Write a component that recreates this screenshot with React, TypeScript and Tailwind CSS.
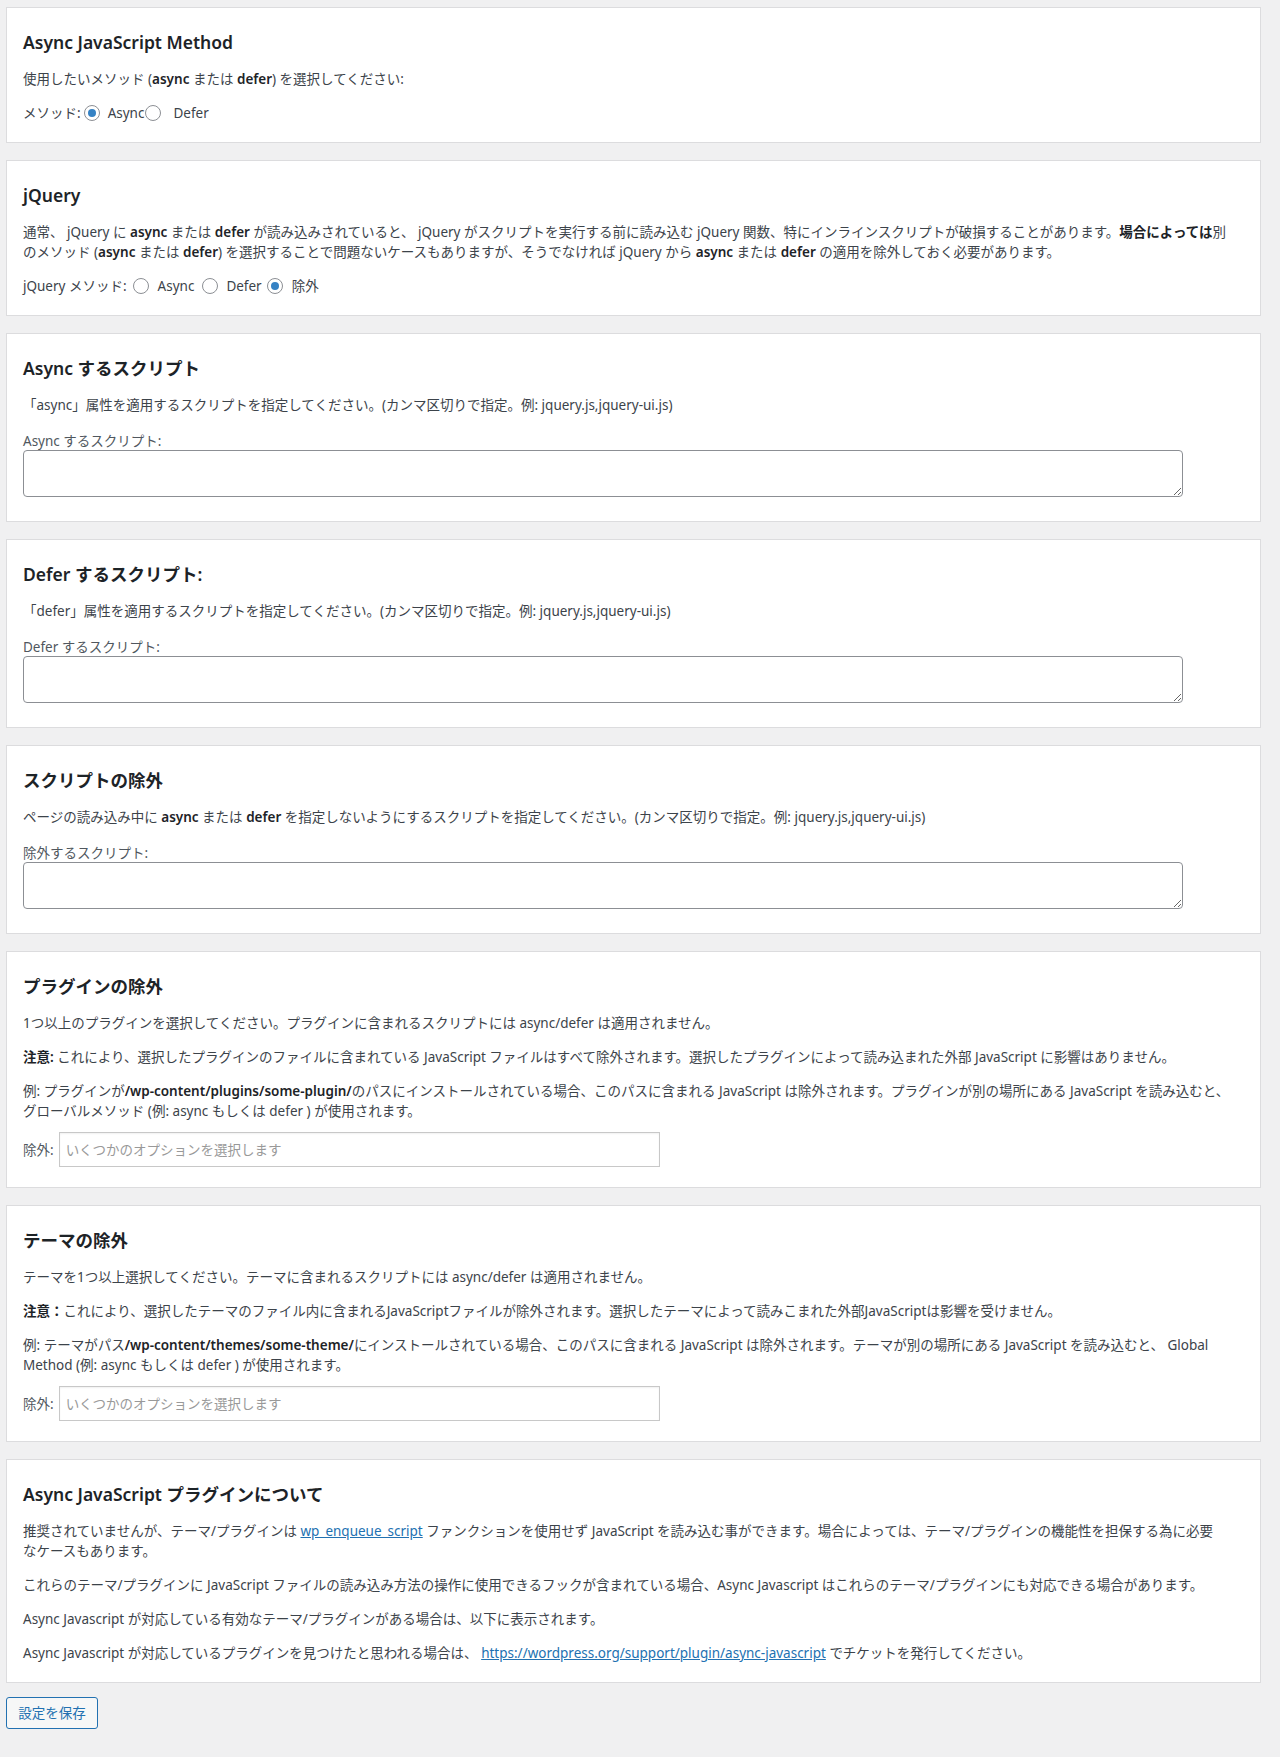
import React from 'react';

const font = "font-['Noto_Sans','Noto_Sans_CJK_JP',sans-serif]";

function Panel({ title, children, className = '' }: { title: string; children: React.ReactNode; className?: string }) {
  return (
    <div className={`w-[1255px] bg-white border border-[#dcdcde] px-4 pt-[22px] ${className}`}>
      <h2 className="text-[17.5px] leading-[24px] font-semibold text-[#1d2327] mb-[15px]">{title}</h2>
      {children}
    </div>
  );
}

function Radio({ checked = false, className = '' }: { checked?: boolean; className?: string }) {
  return (
    <span
      className={`inline-flex w-4 h-4 shrink-0 items-center justify-center rounded-full border border-[#8c8f94] bg-white ${className}`}
    >
      {checked && <span className="w-2 h-2 rounded-full bg-[#3582c4]" />}
    </span>
  );
}

function ScriptField({ label }: { label: string }) {
  return (
    <div className="pb-[24px]">
      <div className="mt-[17px] leading-[18px] text-[#50575e]">{label}</div>
      <textarea className="block w-[1160px] h-[47px] border border-[#8c8f94] rounded-[4px] bg-white outline-none" />
    </div>
  );
}

function ExcludeSelect() {
  return (
    <div className="flex items-center mt-[11px] pb-[20px]">
      <span className="text-[#50575e]">除外:</span>
      <div className="ml-[5px] w-[601px] h-[35px] border border-[#c8c8c8] bg-white flex items-center pl-[6px] text-[#999999] shadow-[inset_0_1px_2px_rgba(0,0,0,0.06)]">
        いくつかのオプションを選択します
      </div>
    </div>
  );
}

export default function App() {
  return (
    <div className={`min-h-[1757px] bg-[#f0f0f1] pt-[7px] pl-[6px] text-[13.5px] leading-[20px] text-[#3c434a] ${font}`}>
      <div className="flex flex-col gap-[17px]">
        <Panel title="Async JavaScript Method" className="pb-[19px]">
          <p>
            使用したいメソッド (<b className="font-semibold text-[#1d2327]">async</b> または{' '}
            <b className="font-semibold text-[#1d2327]">defer</b>) を選択してください:
          </p>
          <div className="flex items-center mt-[14px] h-5">
            <span>メソッド:</span>
            <Radio checked className="ml-[3px]" />
            <span className="ml-[8px]">Async</span>
            <Radio className="ml-[1px]" />
            <span className="ml-[12px]">Defer</span>
          </div>
        </Panel>

        <Panel title="jQuery" className="pb-[19px]">
          <p className="whitespace-nowrap">
            通常、 jQuery に <b className="font-semibold text-[#1d2327]">async</b> または{' '}
            <b className="font-semibold text-[#1d2327]">defer</b> が読み込みされていると、 jQuery
            がスクリプトを実行する前に読み込む jQuery 関数、特にインラインスクリプトが破損することがあります。
            <b className="font-semibold text-[#1d2327]">場合によっては</b>別
            <br />
            のメソッド (<b className="font-semibold text-[#1d2327]">async</b> または{' '}
            <b className="font-semibold text-[#1d2327]">defer</b>) を選択することで問題ないケースもありますが、そうでなければ
            jQuery から <b className="font-semibold text-[#1d2327]">async</b> または{' '}
            <b className="font-semibold text-[#1d2327]">defer</b> の適用を除外しておく必要があります。
          </p>
          <div className="flex items-center mt-[14px] h-5">
            <span>jQuery メソッド:</span>
            <Radio className="ml-[6px]" />
            <span className="ml-[9px]">Async</span>
            <Radio className="ml-[8px]" />
            <span className="ml-[8px]">Defer</span>
            <Radio checked className="ml-[5px]" />
            <span className="ml-[9px]">除外</span>
          </div>
        </Panel>

        <Panel title="Async するスクリプト">
          <p>「async」属性を適用するスクリプトを指定してください。(カンマ区切りで指定。例: jquery.js,jquery-ui.js)</p>
          <ScriptField label="Async するスクリプト:" />
        </Panel>

        <Panel title="Defer するスクリプト:">
          <p>「defer」属性を適用するスクリプトを指定してください。(カンマ区切りで指定。例: jquery.js,jquery-ui.js)</p>
          <ScriptField label="Defer するスクリプト:" />
        </Panel>

        <Panel title="スクリプトの除外">
          <p>
            ページの読み込み中に <b className="font-semibold text-[#1d2327]">async</b> または{' '}
            <b className="font-semibold text-[#1d2327]">defer</b>{' '}
            を指定しないようにするスクリプトを指定してください。(カンマ区切りで指定。例: jquery.js,jquery-ui.js)
          </p>
          <ScriptField label="除外するスクリプト:" />
        </Panel>

        <Panel title="プラグインの除外">
          <div className="flex flex-col gap-[14px]">
            <p>1つ以上のプラグインを選択してください。プラグインに含まれるスクリプトには async/defer は適用されません。</p>
            <p className="whitespace-nowrap">
              <b className="font-semibold text-[#1d2327]">注意:</b>{' '}
              これにより、選択したプラグインのファイルに含まれている JavaScript
              ファイルはすべて除外されます。選択したプラグインによって読み込まれた外部 JavaScript に影響はありません。
            </p>
            <p className="whitespace-nowrap">
              例: プラグインが<b className="font-semibold text-[#1d2327]">/wp-content/plugins/some-plugin/</b>
              のパスにインストールされている場合、このパスに含まれる JavaScript は除外されます。プラグインが別の場所にある
              JavaScript を読み込むと、
              <br />
              グローバルメソッド (例: async もしくは defer ) が使用されます。
            </p>
          </div>
          <ExcludeSelect />
        </Panel>

        <Panel title="テーマの除外">
          <div className="flex flex-col gap-[14px]">
            <p>テーマを1つ以上選択してください。テーマに含まれるスクリプトには async/defer は適用されません。</p>
            <p className="whitespace-nowrap">
              <b className="font-semibold text-[#1d2327]">注意：</b>
              これにより、選択したテーマのファイル内に含まれるJavaScriptファイルが除外されます。選択したテーマによって読みこまれた外部JavaScriptは影響を受けません。
            </p>
            <p className="whitespace-nowrap">
              例: テーマがパス<b className="font-semibold text-[#1d2327]">/wp-content/themes/some-theme/</b>
              にインストールされている場合、このパスに含まれる JavaScript は除外されます。テーマが別の場所にある JavaScript
              を読み込むと、 Global
              <br />
              Method (例: async もしくは defer ) が使用されます。
            </p>
          </div>
          <ExcludeSelect />
        </Panel>

        <Panel title="Async JavaScript プラグインについて" className="pb-[19px]">
          <div className="flex flex-col gap-[14px]">
            <p className="whitespace-nowrap">
              推奨されていませんが、テーマ/プラグインは{' '}
              <a href="#" className="text-[#2271b1] underline">
                wp_enqueue_script
              </a>{' '}
              ファンクションを使用せず JavaScript を読み込む事ができます。場合によっては、テーマ/プラグインの機能性を担保する為に必要
              <br />
              なケースもあります。
            </p>
            <p>
              これらのテーマ/プラグインに JavaScript
              ファイルの読み込み方法の操作に使用できるフックが含まれている場合、Async Javascript
              はこれらのテーマ/プラグインにも対応できる場合があります。
            </p>
            <p>Async Javascript が対応している有効なテーマ/プラグインがある場合は、以下に表示されます。</p>
            <p>
              Async Javascript が対応しているプラグインを見つけたと思われる場合は、{' '}
              <a href="#" className="text-[#2271b1] underline">
                https://wordpress.org/support/plugin/async-javascript
              </a>{' '}
              でチケットを発行してください。
            </p>
          </div>
        </Panel>
      </div>

      <button className="mt-[14px] w-[92px] h-8 border border-[#2271b1] rounded-[3px] bg-[#f6f7f7] text-[#2271b1] text-[13.5px]">
        設定を保存
      </button>
    </div>
  );
}
